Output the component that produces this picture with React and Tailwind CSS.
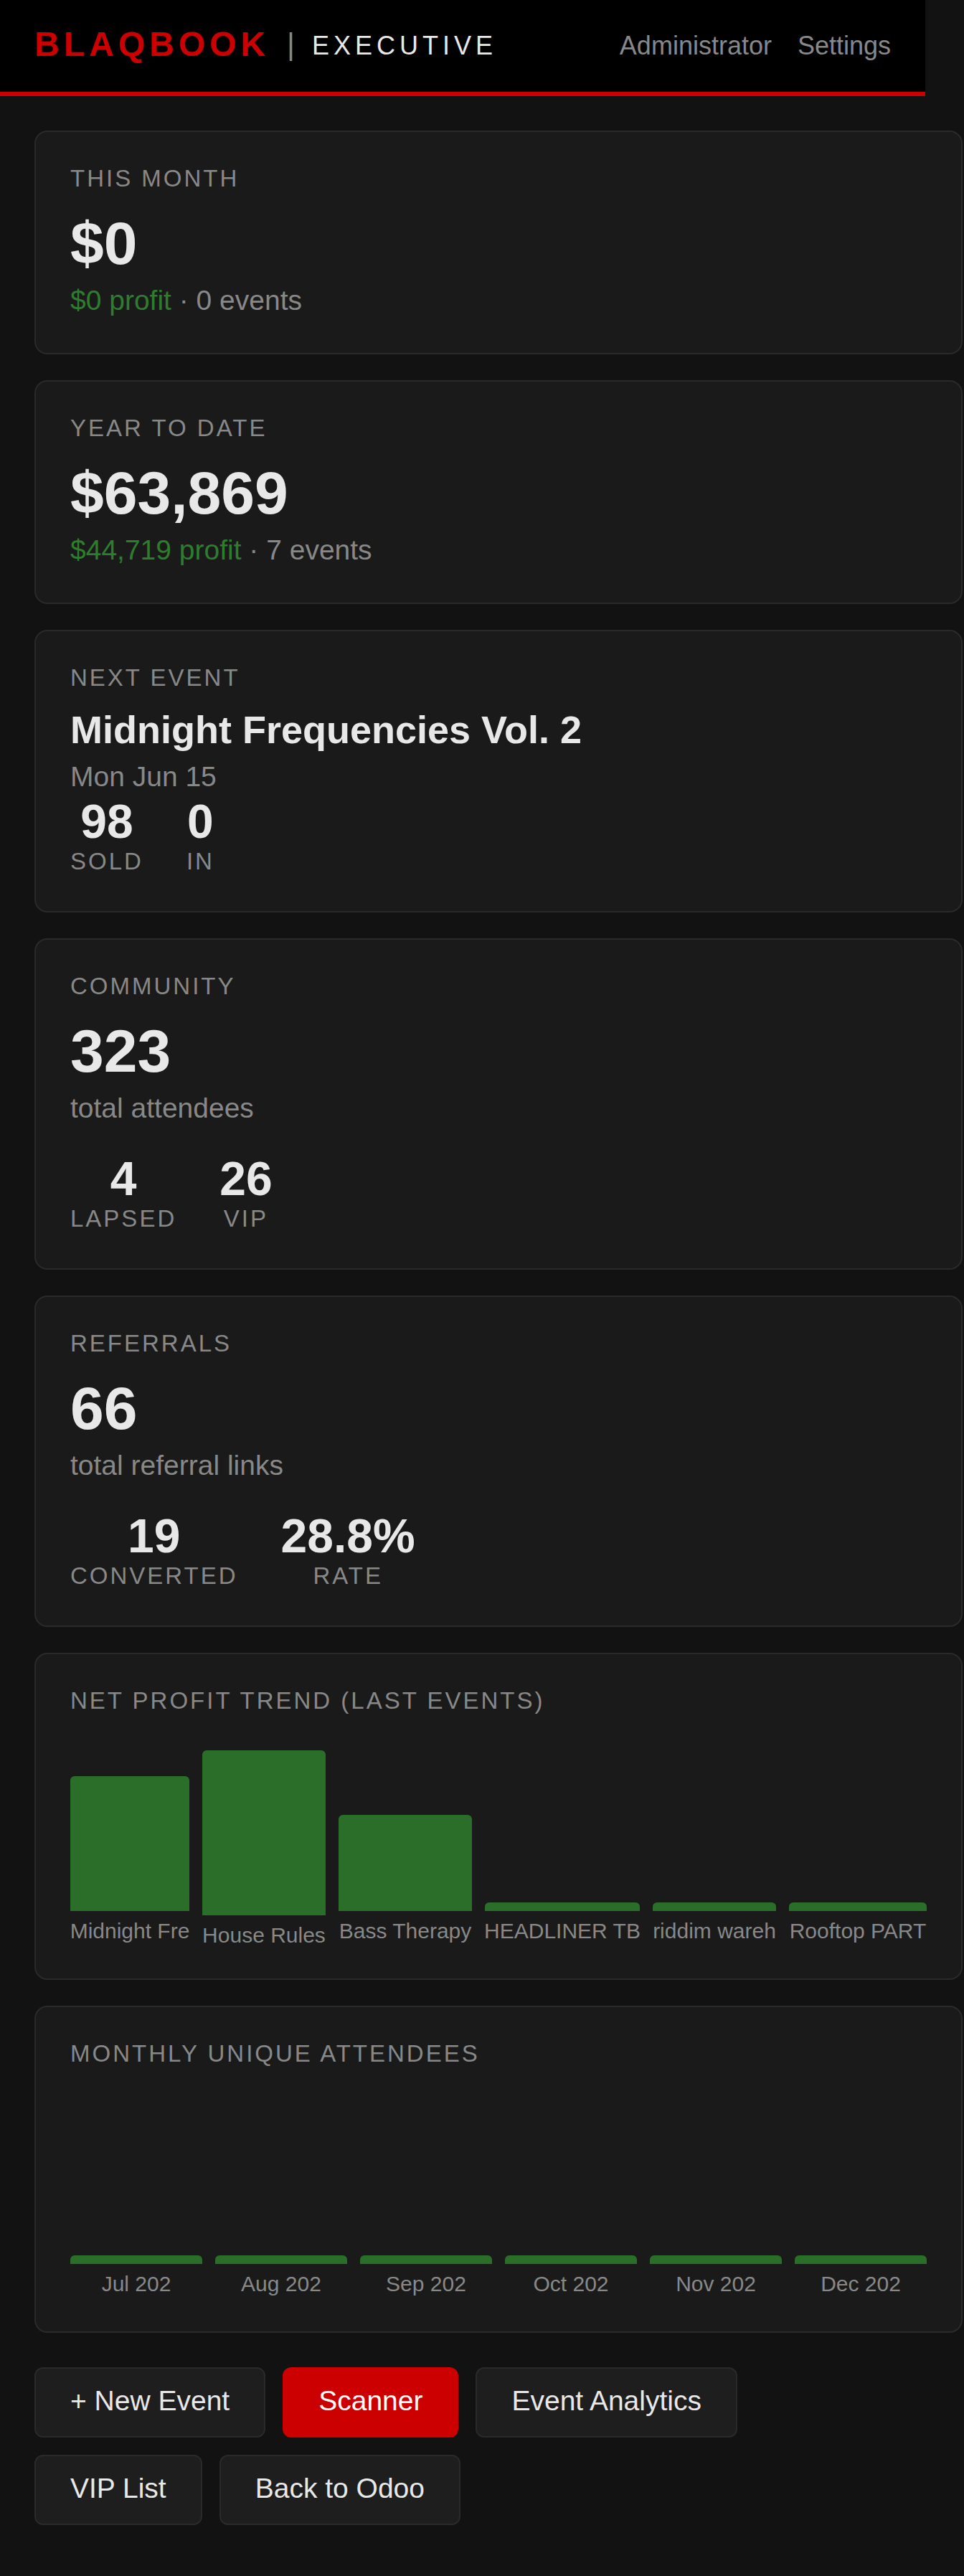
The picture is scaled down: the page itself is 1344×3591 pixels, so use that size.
const profitBars = [
  { label: "Midnight Fre", height: 188, width: "w-[166px]" },
  { label: "House Rules", height: 230, width: "w-[172px]", overflow: true },
  { label: "Bass Therapy", height: 134, width: "w-[186px]" },
  { label: "HEADLINER TB", height: 12, width: "w-[216px]" },
  { label: "riddim wareh", height: 12, width: "w-[172px]" },
  { label: "Rooftop PART", height: 12, width: "w-[192px]" },
];

const attendeeBars = ["Jul 202", "Aug 202", "Sep 202", "Oct 202", "Nov 202", "Dec 202"].map(
  (label) => ({ label, height: 12, width: "w-[184px]" })
);

function Card({ title, height, children }) {
  return (
    <section
      className={`flex w-[1294px] flex-col rounded-[18px] border-2 border-[#2a2a2a] bg-[#1a1a1a] p-12 ${height}`}
    >
      <h2 className="text-[33px] leading-[33px] tracking-[3px] text-[#888888] uppercase">{title}</h2>
      {children}
    </section>
  );
}

function BigNumber({ children }) {
  return <div className="mt-8 text-[84px] leading-[84px] font-bold">{children}</div>;
}

function Sub({ children }) {
  return <div className="mt-[18px] text-[39px] leading-[39px] text-[#888888]">{children}</div>;
}

function Stats({ items, className }) {
  return (
    <div className={`flex gap-[60px] ${className}`}>
      {items.map(([value, label]) => (
        <div key={label} className="flex flex-col text-center">
          <span className="text-[66px] leading-[66px] font-bold">{value}</span>
          <span className="mt-1.5 text-[33px] leading-[33px] tracking-[3px] text-[#888888] uppercase">
            {label}
          </span>
        </div>
      ))}
    </div>
  );
}

function BarChart({ bars }) {
  return (
    <div className="mt-[53px] flex h-[270px] items-end gap-[18px]">
      {bars.map((bar) => (
        <div
          key={bar.label}
          className={`flex shrink-0 flex-col items-center ${bar.width} ${bar.overflow ? "-mb-1.5" : ""}`}
        >
          <div className="w-full rounded-t-[6px] bg-[#2a6e2a]" style={{ height: bar.height }} />
          <span className="mt-3 h-[34px] text-[30px] leading-[31px] whitespace-nowrap text-[#888888]">
            {bar.label}
          </span>
        </div>
      ))}
    </div>
  );
}

function Action({ primary, children }) {
  return (
    <button
      className={`rounded-xl border-2 px-12 pt-6 pb-[29px] text-[39px] leading-[41px] whitespace-nowrap ${
        primary ? "border-[#cc0000] bg-[#cc0000] text-white" : "border-[#2a2a2a] bg-[#1e1e1e]"
      }`}
    >
      {children}
    </button>
  );
}

export default function App() {
  return (
    <div className="min-h-[3591px] w-[1344px] overflow-hidden bg-[#121212] font-['Liberation_Sans',Arial,sans-serif] text-[#e8e8e8]">
      <header className="flex h-[134px] w-[1290px] items-start justify-between border-b-[6px] border-[#cc0000] bg-black px-12 pt-9">
        <div className="flex items-start gap-6">
          <span className="text-[48px] leading-[51px] font-bold tracking-[6px] text-[#cc0000]">BLAQBOOK</span>
          <span className="text-[42px] leading-[51px] text-[#888888]">|</span>
          <span className="text-[36px] leading-[55px] tracking-[6px]">EXECUTIVE</span>
        </div>
        <nav className="flex gap-9 text-[36px] leading-[55px] text-[#888888]">
          <span>Administrator</span>
          <span>Settings</span>
        </nav>
      </header>

      <main className="flex flex-col gap-9 px-12 pt-12">
        <Card title="This Month" height="h-[312px]">
          <BigNumber>$0</BigNumber>
          <Sub>
            <span className="text-[#2e7d2e]">$0 profit</span> · 0 events
          </Sub>
        </Card>
        <Card title="Year to Date" height="h-[312px]">
          <BigNumber>$63,869</BigNumber>
          <Sub>
            <span className="text-[#2e7d2e]">$44,719 profit</span> · 7 events
          </Sub>
        </Card>
        <Card title="Next Event" height="h-[394px]">
          <div className="mt-[29px] text-[54px] leading-[54px] font-bold">Midnight Frequencies Vol. 2</div>
          <div className="mt-[19px] text-[39px] leading-[39px] text-[#888888]">Mon Jun 15</div>
          <Stats className="mt-[10px]" items={[["98", "Sold"], ["0", "In"]]} />
        </Card>
        <Card title="Community" height="h-[462px]">
          <BigNumber>323</BigNumber>
          <Sub>total attendees</Sub>
          <Stats className="mt-[46px]" items={[["4", "Lapsed"], ["26", "VIP"]]} />
        </Card>
        <Card title="Referrals" height="h-[462px]">
          <BigNumber>66</BigNumber>
          <Sub>total referral links</Sub>
          <Stats className="mt-[46px]" items={[["19", "Converted"], ["28.8%", "Rate"]]} />
        </Card>
        <Card title="Net Profit Trend (Last Events)" height="h-[456px]">
          <BarChart bars={profitBars} />
        </Card>
        <Card title="Monthly Unique Attendees" height="h-[456px]">
          <BarChart bars={attendeeBars} />
        </Card>
        <div className="mt-3 flex w-[1194px] flex-wrap gap-6">
          <Action>+ New Event</Action>
          <Action primary>Scanner</Action>
          <Action>Event Analytics</Action>
          <Action>VIP List</Action>
          <Action>Back to Odoo</Action>
        </div>
      </main>
    </div>
  );
}
